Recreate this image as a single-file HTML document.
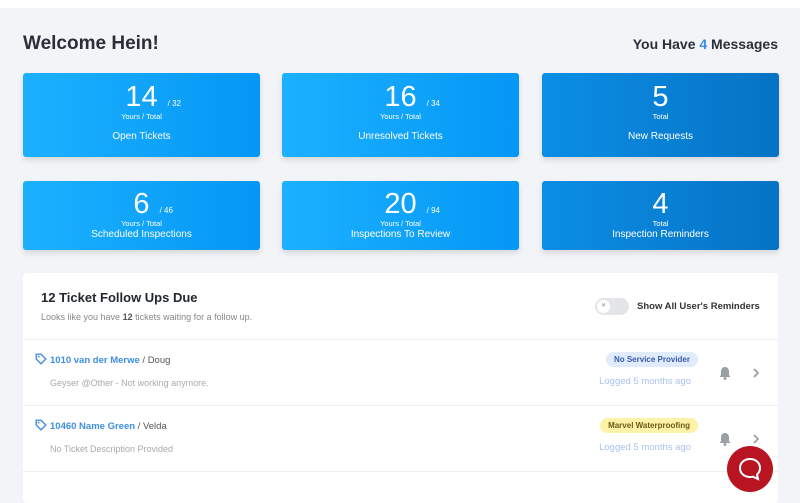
<!DOCTYPE html>
<html><head><style>
*{margin:0;padding:0;box-sizing:border-box}
body{width:800px;height:480px;overflow:hidden;background:#f3f4f7;font-family:"Liberation Sans",sans-serif;position:relative}
.top{position:absolute;left:0;top:0;width:800px;height:8px;background:#fff}
h1{position:absolute;left:23px;top:33px;font-size:19px;font-weight:bold;color:#2b2f3a}
.msg{position:absolute;right:22px;top:36px;font-size:14px;font-weight:bold;color:#2b2f3a}
.msg b{color:#3a8ee6}
.card{position:absolute;width:237px;border-radius:3px;color:#fff;text-align:center;background:linear-gradient(90deg,#1cb1ff,#0597f5);box-shadow:0 3px 6px rgba(0,0,0,.12)}
.card.d{background:linear-gradient(90deg,#0b8ee6,#0673c4)}
.num{font-size:29px;font-weight:300;line-height:30px;position:relative;display:inline-block}
.num small{position:absolute;left:100%;margin-left:10px;top:17px;font-size:8px;line-height:10px;white-space:nowrap}
.yt{font-size:7.5px;line-height:10px}
.lbl{font-size:10px}
.panel{position:absolute;left:23px;top:273px;width:755px;height:230px;background:#fff;border-radius:4px}
.pt{position:absolute;left:18px;top:17px;font-size:13px;font-weight:bold;color:#22262e}
.ps{position:absolute;left:18px;top:39px;font-size:9px;color:#888}
.ps b{color:#555}
.tog{position:absolute;left:572px;top:25px;width:34px;height:17px;border-radius:9px;background:#e4e5e8}
.tog i{position:absolute;left:2px;top:2px;width:13px;height:13px;border-radius:50%;background:#fff;font-size:6px;color:#888;text-align:center;line-height:13px;font-style:normal}
.tl{position:absolute;left:614px;top:28px;font-size:9.5px;font-weight:bold;color:#333}
.sep{position:absolute;left:0;width:755px;height:1px;background:#eceef0}
.row{position:absolute;left:0;width:755px;height:65px}
.tn{position:absolute;left:27px;top:15px;font-size:9.5px;color:#555}
.tn b{color:#3d8fe0}
.tag{position:absolute;left:12px;top:13px;width:12px;height:12px}
.ds{position:absolute;left:27px;top:38px;font-size:9px;color:#aaa}
.badge{position:absolute;right:80px;top:12px;font-size:8px;font-weight:bold;padding:3px 8px;border-radius:8px}
.lg{position:absolute;right:87px;top:36px;font-size:9.5px;color:#a9c2ec}
.bell{position:absolute;left:695px;top:26px}
.chev{position:absolute;left:728px;top:26px}
.chat{position:absolute;left:727px;top:446px;width:46px;height:46px;border-radius:50%;background:#b81422}
</style></head><body>
<div class="top"></div>
<h1>Welcome Hein!</h1>
<div class="msg">You Have <b>4</b> Messages</div>

<div class="card" style="left:23px;top:73px;height:84px;padding-top:9px"><div class="num">14<small>/ 32</small></div><div class="yt">Yours / Total</div><div class="lbl" style="margin-top:9px">Open Tickets</div></div>
<div class="card" style="left:282px;top:73px;height:84px;padding-top:9px"><div class="num">16<small>/ 34</small></div><div class="yt">Yours / Total</div><div class="lbl" style="margin-top:9px">Unresolved Tickets</div></div>
<div class="card d" style="left:542px;top:73px;height:84px;padding-top:9px"><div class="num">5</div><div class="yt">Total</div><div class="lbl" style="margin-top:9px">New Requests</div></div>

<div class="card" style="left:23px;top:181px;height:69px;padding-top:8px"><div class="num">6<small>/ 46</small></div><div class="yt">Yours / Total</div><div class="lbl">Scheduled Inspections</div></div>
<div class="card" style="left:282px;top:181px;height:69px;padding-top:8px"><div class="num">20<small>/ 94</small></div><div class="yt">Yours / Total</div><div class="lbl">Inspections To Review</div></div>
<div class="card d" style="left:542px;top:181px;height:69px;padding-top:8px"><div class="num">4</div><div class="yt">Total</div><div class="lbl">Inspection Reminders</div></div>

<div class="panel">
<div class="pt">12 Ticket Follow Ups Due</div>
<div class="ps">Looks like you have <b>12</b> tickets waiting for a follow up.</div>
<div class="tog"><i>✕</i></div>
<div class="tl">Show All User's Reminders</div>
<div class="sep" style="top:66px"></div>
<div class="row" style="top:67px">
<svg class="tag" viewBox="0 0 10 10"><path d="M1 1h4l4 4-4 4-4-4z" fill="none" stroke="#4a90e2" stroke-width="1.2"/><circle cx="3" cy="3" r=".8" fill="#4a90e2"/></svg>
<div class="tn"><b>1010 van der Merwe</b> / Doug</div>
<div class="ds">Geyser @Other - Not working anymore.</div>
<div class="badge" style="background:#e0ecfc;color:#3b5ba8">No Service Provider</div>
<div class="lg">Logged 5 months ago</div>
<svg class="bell" width="14" height="14" viewBox="0 0 14 14"><path d="M7 1c-2.5 0-4 2-4 4.5V9L1.5 11h11L11 9V5.5C11 3 9.5 1 7 1z" fill="#9a9ea5"/><circle cx="7" cy="12.5" r="1.5" fill="#9a9ea5"/></svg>
<svg class="chev" width="10" height="14" viewBox="0 0 10 14"><path d="M3 3l4 4-4 4" fill="none" stroke="#999" stroke-width="1.6"/></svg>
</div>
<div class="sep" style="top:132px"></div>
<div class="row" style="top:133px">
<svg class="tag" viewBox="0 0 10 10"><path d="M1 1h4l4 4-4 4-4-4z" fill="none" stroke="#4a90e2" stroke-width="1.2"/><circle cx="3" cy="3" r=".8" fill="#4a90e2"/></svg>
<div class="tn"><b>10460 Name Green</b> / Velda</div>
<div class="ds">No Ticket Description Provided</div>
<div class="badge" style="background:#fdf2a8;color:#6b5a10">Marvel Waterproofing</div>
<div class="lg">Logged 5 months ago</div>
<svg class="bell" width="14" height="14" viewBox="0 0 14 14"><path d="M7 1c-2.5 0-4 2-4 4.5V9L1.5 11h11L11 9V5.5C11 3 9.5 1 7 1z" fill="#9a9ea5"/><circle cx="7" cy="12.5" r="1.5" fill="#9a9ea5"/></svg>
<svg class="chev" width="10" height="14" viewBox="0 0 10 14"><path d="M3 3l4 4-4 4" fill="none" stroke="#999" stroke-width="1.6"/></svg>
</div>
<div class="sep" style="top:198px"></div>
</div>
<div class="chat"><svg width="46" height="46" viewBox="0 0 46 46"><path d="M23 13c-6 0-10 4-10 9s4 9 10 9c1 0 2 0 3-.3L31 33l-1-4.5c2-1.7 3-4 3-6.5 0-5-4-9-10-9z" fill="none" stroke="#fff" stroke-width="2"/></svg></div>
</body></html>
